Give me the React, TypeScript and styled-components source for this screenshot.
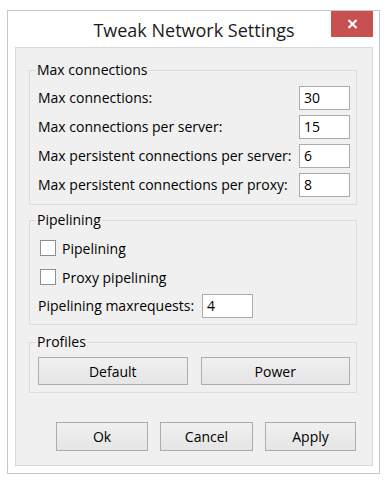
import React from 'react';
import styled, { createGlobalStyle } from 'styled-components';

const Global = createGlobalStyle`
  html, body { margin: 0; padding: 0; background: #ffffff; }
  body { font-family: "Open Sans", "Noto Sans", sans-serif; color: #000; }
  * { box-sizing: border-box; }
`;

const Window = styled.div`
  margin: 10px 0 0 7px;
  width: 373px;
  height: 464px;
  border: 1px solid #c6c6c6;
  background: #ffffff;
  padding: 0 6px 7px 7px;
  display: flex;
  flex-direction: column;
`;

const TitleBar = styled.div`
  height: 36px;
  display: grid;
  grid-template-columns: 42px 1fr 42px;
  align-items: center;
`;

const Title = styled.div`
  grid-column: 2;
  text-align: center;
  font-size: 18px;
  color: #1b1b1b;
  line-height: 24px;
  padding-top: 1px;
`;

const CloseButton = styled.div`
  grid-column: 3;
  align-self: start;
  width: 42px;
  height: 26px;
  background: #c75050;
  display: flex;
  align-items: center;
  justify-content: center;
`;

const Client = styled.div`
  flex: 1;
  border: 1px solid #d9d9d9;
  background: #f0f0f0;
  padding: 13px 15px 0 13px;
  display: flex;
  flex-direction: column;
`;

const Group = styled.fieldset<{ $top: number; $pt: number; $pb: number }>`
  margin: ${p => p.$top}px 0 0 0;
  padding: ${p => p.$pt}px 6px ${p => p.$pb}px 8px;
  border: 1px solid #dcdcdc;
  min-width: 0;
`;

const Legend = styled.legend`
  padding: 0 1px;
  margin-left: -2px;
  font-size: 14px;
  line-height: 18px;
`;

const FieldGrid = styled.div`
  display: grid;
  grid-template-columns: 1fr 51px;
  row-gap: 5px;
  align-items: center;
`;

const Label = styled.span`
  font-size: 14px;
  line-height: 24px;
  white-space: nowrap;
`;

const NumberBox = styled.div`
  width: 51px;
  height: 24px;
  border: 1px solid #acacac;
  background: #ffffff;
  padding-left: 4px;
  font-size: 14px;
  line-height: 22px;
`;

const Stack = styled.div`
  display: flex;
  flex-direction: column;
  gap: 5px;
`;

const CheckRow = styled.label`
  height: 24px;
  display: flex;
  align-items: center;
  gap: 6px;
  padding-left: 2px;
  font-size: 14px;
`;

const CheckBox = styled.span`
  width: 16px;
  height: 16px;
  border: 1px solid #8e8f8f;
  background: #ffffff;
`;

const InlineField = styled.div`
  display: flex;
  align-items: center;
  gap: 8px;
`;

const ProfileButtons = styled.div`
  display: grid;
  grid-template-columns: 1fr 1fr;
  column-gap: 13px;
`;

const Button = styled.button<{ $w?: number; $h: number }>`
  width: ${p => (p.$w ? `${p.$w}px` : 'auto')};
  height: ${p => p.$h}px;
  border: 1px solid #acacac;
  background: linear-gradient(#f0f0f0, #e5e5e5);
  font-family: inherit;
  font-size: 14px;
  color: #000;
  padding: 0;
`;

const Footer = styled.div`
  margin-top: 29px;
  padding-right: 1px;
  display: flex;
  justify-content: flex-end;
  gap: 12px;
`;

const maxFields: [string, string][] = [
  ['Max connections:', '30'],
  ['Max connections per server:', '15'],
  ['Max persistent connections per server:', '6'],
  ['Max persistent connections per proxy:', '8'],
];

export default function App() {
  return (
    <>
      <Global />
      <Window>
        <TitleBar>
          <Title>Tweak Network Settings</Title>
          <CloseButton>
            <svg width="11" height="10" viewBox="0 0 11 10">
              <path d="M1.5 1 L9.5 9 M9.5 1 L1.5 9" stroke="#ffffff" strokeWidth="2.2" />
            </svg>
          </CloseButton>
        </TitleBar>
        <Client>
          <Group $top={0} $pt={7} $pb={7}>
            <Legend>Max connections</Legend>
            <FieldGrid>
              {maxFields.map(([label, value]) => (
                <React.Fragment key={label}>
                  <Label>{label}</Label>
                  <NumberBox>{value}</NumberBox>
                </React.Fragment>
              ))}
            </FieldGrid>
          </Group>
          <Group $top={6} $pt={7} $pb={6}>
            <Legend>Pipelining</Legend>
            <Stack>
              <CheckRow>
                <CheckBox />
                Pipelining
              </CheckRow>
              <CheckRow>
                <CheckBox />
                Proxy pipelining
              </CheckRow>
              <InlineField>
                <Label>Pipelining maxrequests:</Label>
                <NumberBox>4</NumberBox>
              </InlineField>
            </Stack>
          </Group>
          <Group $top={8} $pt={6} $pb={7}>
            <Legend>Profiles</Legend>
            <ProfileButtons>
              <Button $h={28}>Default</Button>
              <Button $h={28}>Power</Button>
            </ProfileButtons>
          </Group>
          <Footer>
            <Button $w={92} $h={29}>Ok</Button>
            <Button $w={93} $h={29}>Cancel</Button>
            <Button $w={91} $h={29}>Apply</Button>
          </Footer>
        </Client>
      </Window>
    </>
  );
}
